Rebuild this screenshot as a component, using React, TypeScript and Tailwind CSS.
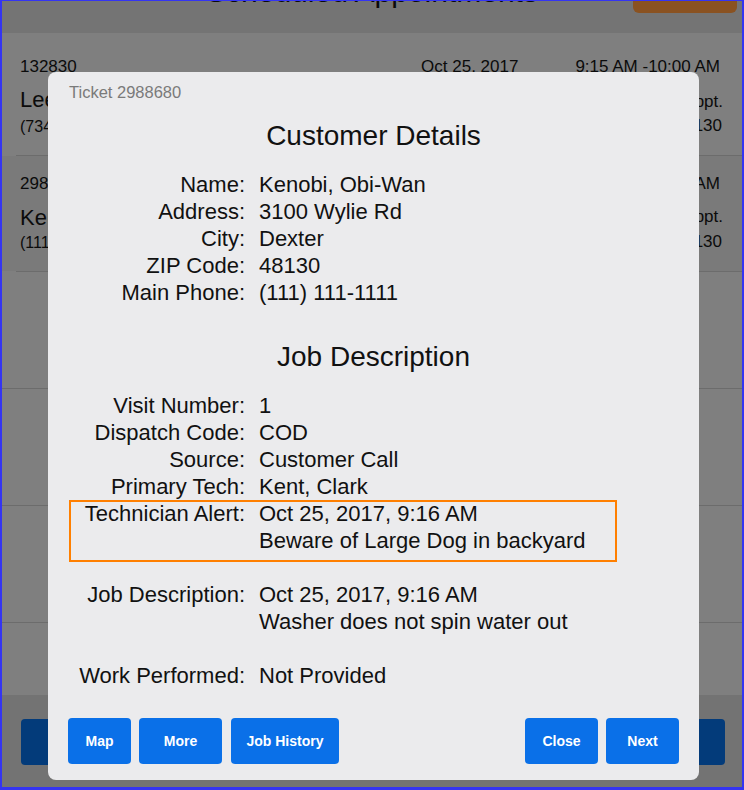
import React from "react";

const font = { fontFamily: '"Liberation Sans", Arial, Helvetica, sans-serif' };

function Row({ label, lines }: { label: string; lines: string[] }) {
  return (
    <div className="grid grid-cols-[177px_1fr] gap-x-[14px] text-[22px] leading-[27px] text-[#111]">
      <div className="text-right">{label}</div>
      <div>
        {lines.map((l, i) => (
          <div key={i}>{l}</div>
        ))}
      </div>
    </div>
  );
}

export default function App() {
  return (
    <div
      style={font}
      className="relative w-[744px] h-[790px] bg-[#3434f2] pl-[2px] pt-[1px] pr-[2px] pb-[3px]"
    >
      <div className="h-full flex flex-col overflow-hidden bg-[#7f7f7f] text-[#0b0b0b]">
        {/* header */}
        <div className="h-[32px] shrink-0 bg-[#747474] grid grid-cols-[1fr_auto_1fr] overflow-hidden">
          <div />
          <div className="text-[30px] leading-[30px] -mt-[24px] whitespace-nowrap">
            Scheduled Appointments
          </div>
          <div className="flex justify-end pr-[5px]">
            <div className="w-[104px] h-[12px] bg-[#8a5221] rounded-b-[6px]" />
          </div>
        </div>

        {/* row 1 */}
        <div className="h-[122px] shrink-0 bg-[#7f7f7f] flex justify-between pl-[18px] pr-[22px] pt-[24px]">
          <div>
            <div className="text-[17px] leading-[20px]">132830</div>
            <div className="mt-[10px] text-[22px] leading-[26px]">Lee, Stan</div>
            <div className="mt-[4px] text-[16px] leading-[20px]">(734) 555-1212</div>
          </div>
          <div className="text-right">
            <div className="flex gap-[57px] text-[17px] leading-[20px]">
              <span>Oct 25, 2017</span>
              <span>9:15 AM -10:00 AM</span>
            </div>
            <div className="mt-[15px] -mr-[3px] text-[17px] leading-[20px]">No Appt.</div>
            <div className="mt-[4px] -mr-[2px] text-[17px] leading-[20px]">Dexter, MI 48130</div>
          </div>
        </div>
        <div className="h-px shrink-0 bg-[#7f7f7f] pl-[14px]">
          <div className="h-px bg-[#6c6c6c]" />
        </div>

        {/* row 2 */}
        <div className="h-[115px] shrink-0 bg-[#7a7a7a] flex justify-between pl-[18px] pr-[22px] pt-[18px]">
          <div>
            <div className="text-[17px] leading-[20px]">2988680</div>
            <div className="mt-[11px] text-[22px] leading-[26px]">Kenobi, Obi-Wan</div>
            <div className="mt-[2px] text-[16px] leading-[20px]">(111) 111-1111</div>
          </div>
          <div className="text-right">
            <div className="flex gap-[57px] text-[17px] leading-[20px]">
              <span>Oct 25, 2017</span>
              <span>9:16 AM -10:16 AM</span>
            </div>
            <div className="mt-[13px] -mr-[3px] text-[17px] leading-[20px]">No Appt.</div>
            <div className="mt-[5px] -mr-[2px] text-[17px] leading-[20px]">Dexter, MI 48130</div>
          </div>
        </div>
        <div className="h-px shrink-0 bg-[#7f7f7f] pl-[14px]">
          <div className="h-px bg-[#6c6c6c]" />
        </div>

        {/* empty rows */}
        <div className="h-[116px] shrink-0" />
        <div className="h-px shrink-0 bg-[#6c6c6c]" />
        <div className="h-[116px] shrink-0" />
        <div className="h-px shrink-0 bg-[#6c6c6c]" />
        <div className="h-[116px] shrink-0" />
        <div className="h-px shrink-0 bg-[#6c6c6c]" />
        <div className="h-[72px] shrink-0" />

        {/* bottom bar */}
        <div className="flex-1 bg-[#737373] flex justify-between pl-[19px] pr-[17px] pt-[24px]">
          <div className="w-[200px] h-[46px] rounded-[4px] bg-[#033b7a]" />
          <div className="w-[160px] h-[46px] rounded-[4px] bg-[#033b7a]" />
        </div>
      </div>

      {/* modal */}
      <div className="absolute left-[48px] top-[72px] w-[651px] h-[708px] rounded-[8px] bg-[#ebebed] flex flex-col pt-[10px] px-[20px] pb-[16px]">
        <div className="pl-[1px] text-[16.5px] leading-[20px] text-[#7a7a7a]">Ticket 2988680</div>
        <div className="mt-[17px] text-center text-[28px] leading-[34px] text-[#111]">Customer Details</div>
        <div className="mt-[17.5px]">
          <Row label="Name:" lines={["Kenobi, Obi-Wan"]} />
          <Row label="Address:" lines={["3100 Wylie Rd"]} />
          <Row label="City:" lines={["Dexter"]} />
          <Row label="ZIP Code:" lines={["48130"]} />
          <Row label="Main Phone:" lines={["(111) 111-1111"]} />
        </div>
        <div className="mt-[34.5px] text-center text-[28px] leading-[34px] text-[#111]">Job Description</div>
        <div className="mt-[17.5px]">
          <Row label="Visit Number:" lines={["1"]} />
          <Row label="Dispatch Code:" lines={["COD"]} />
          <Row label="Source:" lines={["Customer Call"]} />
          <Row label="Primary Tech:" lines={["Kent, Clark"]} />
          <div className="relative">
            <Row
              label="Technician Alert:"
              lines={["Oct 25, 2017, 9:16 AM", "Beware of Large Dog in backyard"]}
            />
            <div className="absolute left-[1px] top-[0.5px] w-[548px] h-[62px] border-2 border-[#ff7f00]" />
          </div>
        </div>
        <div className="mt-[27px]">
          <Row label="Job Description:" lines={["Oct 25, 2017, 9:16 AM", "Washer does not spin water out"]} />
        </div>
        <div className="mt-[27px]">
          <Row label="Work Performed:" lines={["Not Provided"]} />
        </div>
        <div className="mt-auto flex items-center text-white font-bold text-[14px]">
          <div className="flex gap-[8px]">
            <button className="w-[63px] h-[46px] rounded-[4px] bg-[#0a70e8]">Map</button>
            <button className="w-[83px] h-[46px] rounded-[4px] bg-[#0a70e8]">More</button>
            <button className="w-[108px] h-[46px] rounded-[4px] bg-[#0a70e8] ml-[1px]">Job History</button>
          </div>
          <div className="ml-auto flex gap-[8px]">
            <button className="w-[73px] h-[46px] rounded-[4px] bg-[#0a70e8]">Close</button>
            <button className="w-[73px] h-[46px] rounded-[4px] bg-[#0a70e8]">Next</button>
          </div>
        </div>
      </div>
    </div>
  );
}
